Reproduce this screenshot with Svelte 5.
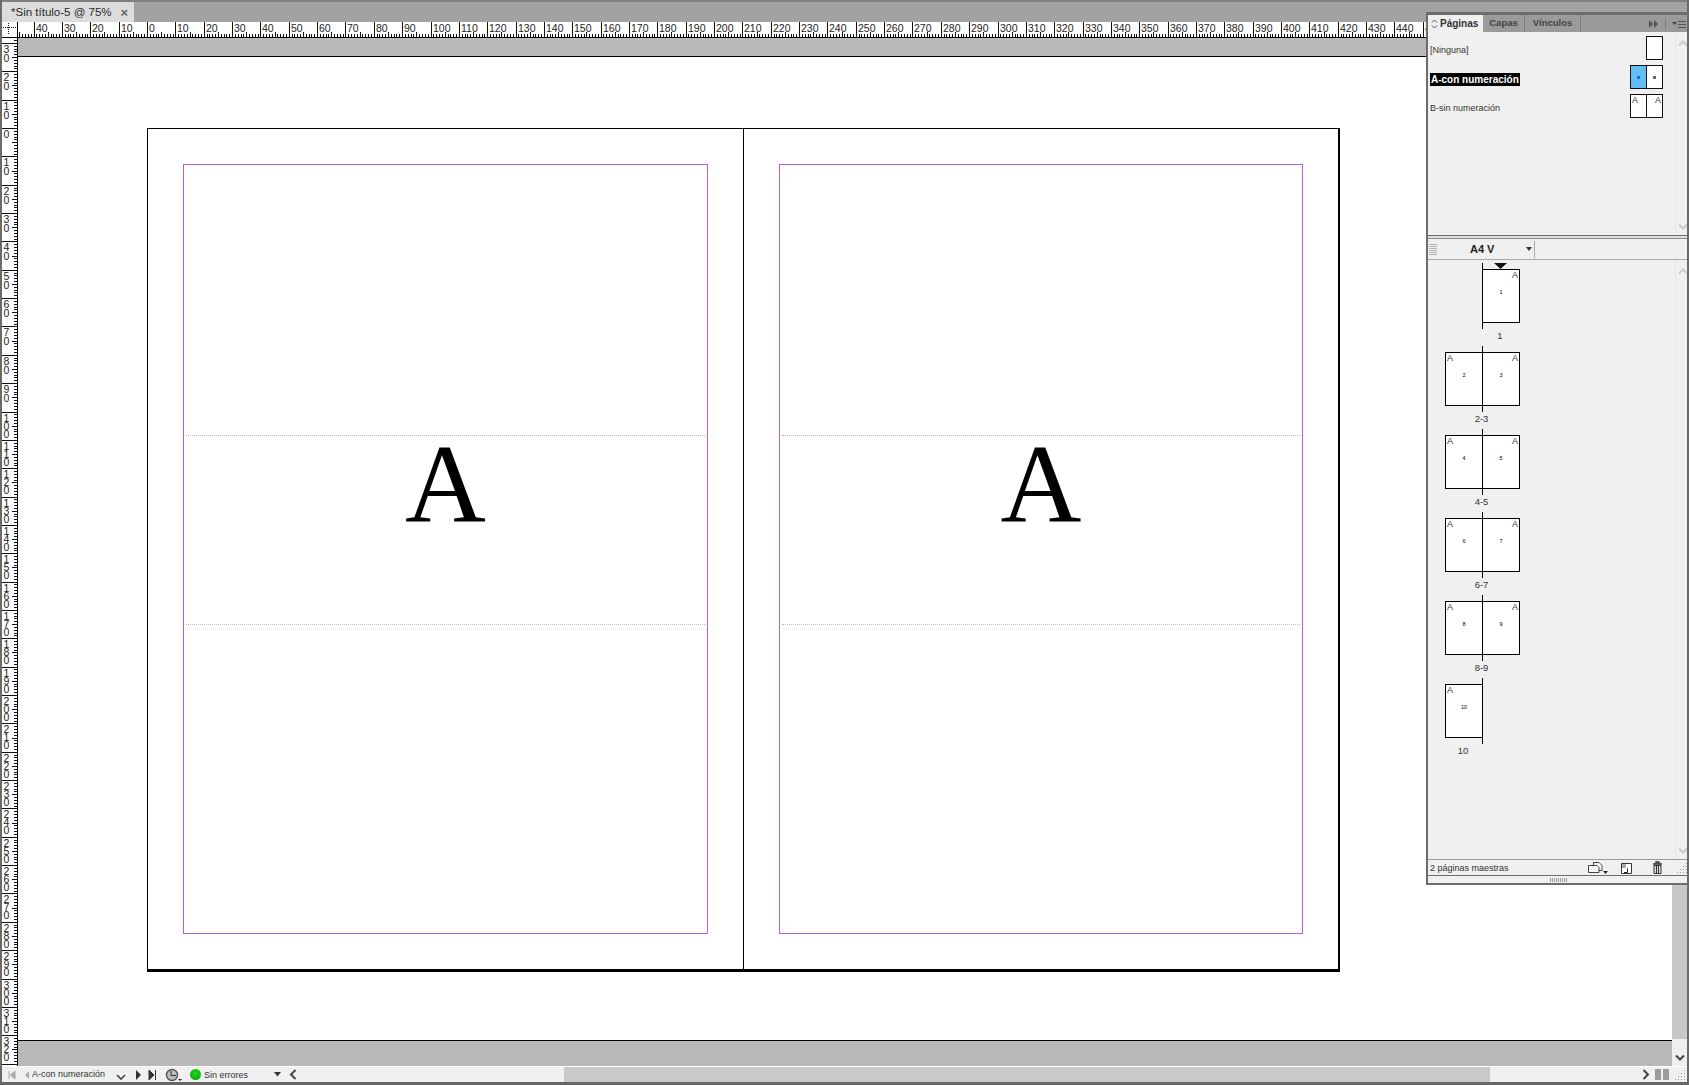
<script>
  const K = 2.835;
  const topTicks = [];
  for (let mm = -46; mm <= 460; mm++) topTicks.push({ mm, x: Math.round(129 + mm * K) + 0.5 });
  const leftTicks = [];
  for (let mm = -31; mm <= 333; mm++) leftTicks.push({ mm, y: Math.round(90 + mm * K) + 0.5 });
  const digits = (mm) => String(Math.abs(mm)).split('');

  const spreads = [
    { label: '1', pages: [{ n: '1', a: 'r' }], cls: 'only-right' },
    { label: '2-3', pages: [{ n: '2', a: 'l' }, { n: '3', a: 'r' }], cls: '' },
    { label: '4-5', pages: [{ n: '4', a: 'l' }, { n: '5', a: 'r' }], cls: '' },
    { label: '6-7', pages: [{ n: '6', a: 'l' }, { n: '7', a: 'r' }], cls: '' },
    { label: '8-9', pages: [{ n: '8', a: 'l' }, { n: '9', a: 'r' }], cls: '' },
    { label: '10', pages: [{ n: '10', a: 'l' }], cls: 'only-left' }
  ];
</script>

<div class="app">
  <div class="tabbar">
    <div class="doc-tab"><span>*Sin título-5 @ 75%</span><span class="close">×</span></div>
  </div>

  <div class="ruler-row">
    <div class="corner">
      <svg width="15" height="15" viewBox="0 0 15 15">
        <path d="M1 5.5H15M6.5 1V12" stroke="#111" stroke-width="1" stroke-dasharray="1 1" fill="none" />
      </svg>
    </div>
    <svg class="ruler-top" width="1671" height="16">
      {#each topTicks as t}
        <line x1={t.x} x2={t.x} y1={t.mm % 10 === 0 ? 0 : t.mm % 5 === 0 ? 10 : 12} y2="15" stroke="#111" />
        {#if t.mm % 10 === 0}
          <text x={t.x + 1.5} y="9.5">{Math.abs(t.mm)}</text>
        {/if}
      {/each}
      <line x1="0" x2="1671" y1="15.5" y2="15.5" stroke="#000" />
    </svg>
  </div>

  <div class="body-row">
    <svg class="ruler-left" width="16" height="1029">
      {#each leftTicks as t}
        <line x1={t.mm % 10 === 0 ? 0 : t.mm % 5 === 0 ? 10 : 12} x2="15" y1={t.y} y2={t.y} stroke="#111" />
        {#if t.mm % 10 === 0}
          {#each digits(t.mm) as d, i}
            <text x="4.5" y={t.y + 9 + i * (Math.abs(t.mm) >= 100 ? 8 : 9)} text-anchor="middle">{d}</text>
          {/each}
        {/if}
      {/each}
      <line x1="15.5" x2="15.5" y1="0" y2="1029" stroke="#000" />
    </svg>

    <div class="workspace">
      <div class="band band-top"></div>
      <div class="canvas">
        <div class="spread">
          {#each [0, 1] as p}
            <div class="page" class:right={p === 1}>
              <div class="margins">
                <div class="zone-a"></div>
                <div class="zone-b"><span class="big-a">A</span></div>
              </div>
            </div>
          {/each}
        </div>
      </div>
      <div class="band band-bottom"></div>
    </div>

    <div class="vscroll">
      <div class="vthumb"></div>
      <div class="vend">
        <svg width="10" height="8" viewBox="0 0 10 8"><path d="M1 1.5 5 5.5 9 1.5" stroke="#444" stroke-width="2" fill="none" /></svg>
      </div>
    </div>
  </div>

  <div class="status">
    <div class="nav">
      <svg width="10" height="10" viewBox="0 0 10 10"><path d="M2 1V9M8 1 3.5 5 8 9Z" stroke="#aaa" fill="#aaa" /></svg>
      <svg class="navb" width="8" height="10" viewBox="0 0 8 10"><path d="M6 1 2 5 6 9Z" fill="#aaa" /></svg>
    </div>
    <div class="page-field">
      <span>A-con numeración</span>
      <svg width="10" height="8" viewBox="0 0 10 8"><path d="M1 2 5 6 9 2" stroke="#444" stroke-width="1.6" fill="none" /></svg>
    </div>
    <div class="nav2">
      <svg width="8" height="10" viewBox="0 0 8 10"><path d="M1 0 6 5 1 10Z" fill="#333" /></svg>
      <svg width="10" height="10" viewBox="0 0 10 10"><path d="M1 0 6 5 1 10ZM7.5 0V10" fill="#333" stroke="#333" stroke-width="1" /></svg>
    </div>
    <div class="preflight">
      <svg width="18" height="14" viewBox="0 0 18 14"><circle cx="7" cy="7" r="5.5" fill="#bdbdbd" stroke="#555" stroke-width="1.4" /><path d="M6 3V7.5H11" stroke="#333" fill="none" /><path d="M13 11H17L15 13Z" fill="#222" /></svg>
    </div>
    <div class="errors">
      <span class="dot"></span><span>Sin errores</span>
      <svg class="errarrow" width="7" height="5" viewBox="0 0 7 5"><path d="M0 0H7L3.5 4.5Z" fill="#333" /></svg>
    </div>
    <div class="hscroll">
      <svg class="hleft" width="8" height="11" viewBox="0 0 8 11"><path d="M6.5 1 2 5.5 6.5 10" stroke="#444" stroke-width="2" fill="none" /></svg>
      <div class="hthumb"></div>
      <svg class="hright" width="8" height="11" viewBox="0 0 8 11"><path d="M1.5 1 6 5.5 1.5 10" stroke="#444" stroke-width="2" fill="none" /></svg>
      <div class="blocks"><i></i><i></i></div>
      <svg class="grip" width="12" height="12" viewBox="0 0 12 12"><path d="M10 1.5h1M7 4.5h1M10 4.5h1M4 7.5h1M7 7.5h1M10 7.5h1M1 10.5h1M4 10.5h1M7 10.5h1M10 10.5h1" stroke="#999" fill="none" /></svg>
    </div>
  </div>

  <aside class="panel">
    <div class="p-tabs">
      <div class="p-tab active">
        <svg width="7" height="10" viewBox="0 0 7 10"><path d="M1 3.5 3.5 1 6 3.5M1 6.5 3.5 9 6 6.5" stroke="#555" fill="none" /></svg>
        <span>Páginas</span>
      </div>
      <div class="p-tab capas">Capas</div>
      <div class="p-tab vinculos">Vínculos</div>
      <div class="p-tools">
        <svg width="10" height="8" viewBox="0 0 10 8"><path d="M0 0 4 4 0 8ZM5 0 9 4 5 8Z" fill="#555" /></svg>
        <i></i>
        <svg width="14" height="8" viewBox="0 0 14 8"><path d="M0 2H5L2.5 5Z" fill="#444" /><path d="M6 1.5H14M6 4.5H14M6 7.5H14" stroke="#555" /></svg>
      </div>
    </div>

    <div class="masters">
      <div class="master-list">
        <div class="m-row">
          <span class="m-name">[Ninguna]</span>
          <div class="m-thumb"><div class="m-page"></div></div>
        </div>
        <div class="m-row">
          <span class="m-name sel">A-con numeración</span>
          <div class="m-thumb">
            <div class="m-page blue"><b></b></div>
            <div class="m-page"><b></b></div>
          </div>
        </div>
        <div class="m-row">
          <span class="m-name">B-sin numeración</span>
          <div class="m-thumb">
            <div class="m-page"><em class="l">A</em></div>
            <div class="m-page"><em class="r">A</em></div>
          </div>
        </div>
      </div>
      <div class="strack">
        <svg width="10" height="7" viewBox="0 0 10 7"><path d="M1 5.5 5 1.5 9 5.5" stroke="#ccc" stroke-width="2" fill="none" /></svg>
        <svg width="10" height="7" viewBox="0 0 10 7"><path d="M1 1.5 5 5.5 9 1.5" stroke="#ccc" stroke-width="2" fill="none" /></svg>
      </div>
    </div>

    <div class="p-divider"></div>

    <div class="p-toolbar">
      <svg class="tgrip" width="8" height="11" viewBox="0 0 8 11"><path d="M0 .5H8M0 2.5H8M0 4.5H8M0 6.5H8M0 8.5H8M0 10.5H8" stroke="#b5b5b5" /></svg>
      <strong>A4 V</strong>
      <svg class="tarrow" width="6" height="4" viewBox="0 0 6 4"><path d="M0 0H6L3 4Z" fill="#333" /></svg>
      <i></i>
    </div>

    <div class="pages">
      <div class="page-list">
        <svg class="current" width="13" height="6" viewBox="0 0 13 6"><path d="M0 0H13L6.5 6Z" fill="#111" /></svg>
        {#each spreads as s}
          <div class="s-row">
            <div class="sp {s.cls}">
              {#each s.pages as pg}
                <div class="tp">
                  <em class={pg.a}>A</em>
                  <small>{pg.n}</small>
                </div>
              {/each}
            </div>
            <div class="s-label {s.cls}">{s.label}</div>
          </div>
        {/each}
      </div>
      <div class="strack">
        <svg width="10" height="7" viewBox="0 0 10 7"><path d="M1 5.5 5 1.5 9 5.5" stroke="#ccc" stroke-width="2" fill="none" /></svg>
        <svg width="10" height="7" viewBox="0 0 10 7"><path d="M1 1.5 5 5.5 9 1.5" stroke="#ccc" stroke-width="2" fill="none" /></svg>
      </div>
    </div>

    <div class="p-footer">
      <span class="f-text">2 páginas maestras</span>
      <div class="f-icons">
        <svg width="20" height="13" viewBox="0 0 20 13"><path d="M.5 4.5H9L11 6.5V11.5H.5ZM5.5 4V1.5H11L14 4.5V9.5H11" stroke="#444" fill="#f8f8f8" /><path d="M15 10H20L17.5 13Z" fill="#222" /></svg>
        <svg width="11" height="12" viewBox="0 0 11 12"><path d="M.5 1.5H10.5V11.5H.5Z" stroke="#333" fill="#fff" /><path d="M1 2H5V6H1Z" fill="#aaa" /><path d="M6.5 6.5V10.5H3" stroke="#222" fill="none" /></svg>
        <svg class="trash" width="11" height="13" viewBox="0 0 11 13"><path d="M1 3H10M4 3V1H7V3" stroke="#333" fill="none" stroke-width="1.4" /><path d="M2 4.5H9V12.5H2Z" stroke="#333" fill="#ddd" /><path d="M4.5 5V12M6.5 5V12" stroke="#333" /></svg>
      </div>
      <svg class="grip" width="12" height="12" viewBox="0 0 12 12"><path d="M10 1.5h1M7 4.5h1M10 4.5h1M4 7.5h1M7 7.5h1M10 7.5h1M1 10.5h1M4 10.5h1M7 10.5h1M10 10.5h1" stroke="#999" fill="none" /></svg>
    </div>
    <div class="p-grip"><svg width="20" height="4" viewBox="0 0 20 4"><path d="M1.5 0V4M3.5 0V4M5.5 0V4M7.5 0V4M9.5 0V4M11.5 0V4M13.5 0V4M15.5 0V4M17.5 0V4" stroke="#999" /></svg></div>
  </aside>
</div>

<style>
  :global(body) { margin: 0; background: #fff; }
  .app {
    position: relative;
    width: 1689px;
    height: 1085px;
    overflow: hidden;
    display: flex;
    flex-direction: column;
    box-sizing: border-box;
    border-left: 2px solid #6a6a6a;
    border-right: 2px solid #6a6a6a;
    border-bottom: 3px solid #666;
    background: #f0f0f0;
    font-family: "Liberation Sans", Arial, sans-serif;
    color: #222;
  }
  .tabbar {
    height: 22px;
    flex: none;
    box-sizing: border-box;
    background: #a2a2a2;
    border-top: 2px solid #7f7f7f;
  }
  .doc-tab {
    width: 132px;
    height: 20px;
    box-sizing: border-box;
    padding-left: 9px;
    background: #dcdcdc;
    display: flex;
    align-items: center;
    font-size: 11.5px;
    white-space: nowrap;
    color: #2a2a2a;
  }
  .close { margin-left: 9px; font-size: 13px; color: #666; font-weight: 700; }

  .ruler-row { display: flex; height: 16px; flex: none; background: #fff; }
  .corner { width: 16px; height: 16px; border-bottom: 1px solid #000; border-right: 1px solid #000; box-sizing: border-box; flex: none; }
  .ruler-top { display: block; flex: none; }
  text { font-family: "Liberation Sans", Arial, sans-serif; font-size: 10.5px; fill: #222; }

  .body-row { display: flex; flex: 1; min-height: 0; }
  .ruler-left { display: block; flex: none; background: #fff; }
  .workspace { flex: 1; min-width: 0; display: flex; flex-direction: column; }
  .band { background: #b9b9b9; flex: none; }
  .band-top { height: 18px; border-bottom: 1px solid #000; }
  .band-bottom { height: 25px; border-top: 1px solid #000; }
  .canvas {
    flex: 1;
    min-height: 0;
    background: #fff;
    box-sizing: border-box;
    padding: 71px 0 0 129px;
  }
  .spread {
    width: 1193px;
    height: 844px;
    box-sizing: border-box;
    display: flex;
    border-style: solid;
    border-color: #000;
    border-width: 1px 2px 3px 1px;
  }
  .page {
    width: 595px;
    flex: none;
    box-sizing: border-box;
    padding: 35px;
  }
  .page.right { border-left: 1px solid #000; }
  .margins {
    height: 100%;
    box-sizing: border-box;
    border: 1px solid #b962ce;
    display: flex;
    flex-direction: column;
  }
  .zone-a { height: 270px; flex: none; }
  .zone-b {
    height: 188px;
    flex: none;
    margin: 0 2px;
    border-top: 1px dotted #bbb;
    border-bottom: 1px dotted #bbb;
    display: flex;
    justify-content: center;
  }
  .big-a {
    font-family: "Liberation Serif", serif;
    font-size: 112px;
    line-height: 96px;
    color: #000;
  }

  .vscroll { width: 15px; flex: none; display: flex; flex-direction: column; background: #efefef; }
  .vthumb { flex: 1; background: #c8c8c8; }
  .vend { height: 27px; flex: none; display: flex; align-items: flex-end; justify-content: center; padding-bottom: 4px; box-sizing: border-box; }

  .status {
    height: 15px;
    flex: none;
    display: flex;
    align-items: center;
    font-size: 9px;
    white-space: nowrap;
    background: #f0f0f0;
    border-top: 1px solid #fff;
    color: #333;
  }
  .nav { width: 30px; flex: none; display: flex; align-items: center; padding-left: 5px; box-sizing: border-box; }
  .navb { margin-left: 6px; }
  .page-field { width: 94px; flex: none; display: flex; justify-content: space-between; align-items: center; box-sizing: border-box; }
  .page-field span { position: relative; top: -1px; }
  .page-field svg { margin-top: 5px; }
  .nav2 { width: 36px; flex: none; display: flex; gap: 5px; align-items: center; padding-left: 9px; box-sizing: border-box; }
  .preflight { width: 24px; flex: none; display: flex; padding-left: 3px; box-sizing: border-box; }
  .errors { width: 99px; flex: none; display: flex; align-items: center; box-sizing: border-box; padding-left: 4px; }
  .dot {
    width: 11px; height: 11px; border-radius: 50%; flex: none; margin-right: 3px;
    background: radial-gradient(circle at 50% 40%, #22d822, #079a07);
  }
  .errarrow { margin-left: 26px; }
  .hscroll { flex: 1; min-width: 0; display: flex; align-items: center; height: 100%; }
  .hleft { margin-left: 4px; flex: none; }
  .hthumb { width: 926px; height: 100%; margin-left: 267px; background: #c9c9c9; flex: none; }
  .hright { margin-left: 152px; flex: none; }
  .blocks { display: flex; gap: 2px; margin-left: 5px; }
  .blocks i { width: 6px; height: 11px; background: #9c9c9c; display: block; }
  .status .grip { margin-left: 5px; flex: none; }

  .panel {
    position: absolute;
    left: 1424px;
    top: 12px;
    width: 263px;
    height: 873px;
    box-sizing: border-box;
    border: 2px solid #6c6c6c;
    border-right: 0;
    border-top-width: 3px;
    background: #f0f0f0;
    display: flex;
    flex-direction: column;
    font-size: 9px;
    white-space: nowrap;
  }
  .p-tabs { height: 17px; flex: none; display: flex; background: #9a9a9a; }
  .p-tab {
    font-weight: 700;
    font-size: 9.5px;
    line-height: 16px;
    color: #444;
    box-sizing: border-box;
    border-right: 1px solid #7d7d7d;
    text-align: center;
  }
  .p-tab.active {
    width: 55px;
    background: #f0f0f0;
    color: #333;
    border-right: 0;
    display: flex;
    align-items: center;
    gap: 2px;
    padding-left: 3px;
    font-size: 10px;
  }
  .capas { width: 42px; }
  .vinculos { width: 56px; }
  .p-tools { margin-left: auto; display: flex; align-items: center; gap: 6px; padding-right: 3px; }
  .p-tools i { width: 1px; height: 10px; background: #777; display: block; }

  .masters { height: 203px; flex: none; display: flex; }
  .master-list { flex: 1; padding: 4px 12px 0 2px; display: flex; flex-direction: column; gap: 5px; }
  .m-row { display: flex; justify-content: space-between; align-items: center; height: 24px; color: #333; }
  .m-name { margin-top: 4px; }
  .sel { background: #000; color: #fff; font-weight: 700; font-size: 10px; padding: 0 1px; line-height: 13px; }
  .m-thumb { display: flex; }
  .m-page {
    width: 17px;
    height: 24px;
    box-sizing: border-box;
    border: 1px solid #111;
    background: #fff;
    position: relative;
    display: flex;
    align-items: center;
    justify-content: center;
  }
  .m-page + .m-page { margin-left: -1px; }
  .m-page.blue { background: #62bdf5; }
  .m-page b { width: 3px; height: 3px; background: #666; display: block; }
  .m-page.blue b { background: #1673b8; }
  .m-page em, .tp em {
    position: absolute;
    top: 0;
    font-style: normal;
    font-size: 9px;
    line-height: 11px;
    color: #333;
  }
  em.l { left: 1px; }
  em.r { right: 1px; }

  .strack {
    width: 14px;
    flex: none;
    box-sizing: border-box;
    border-left: 1px solid #e4e4e4;
    display: flex;
    flex-direction: column;
    justify-content: space-between;
    align-items: center;
    padding: 8px 0 5px;
  }

  .p-divider { height: 4px; flex: none; box-sizing: border-box; border-top: 1px solid #6c6c6c; border-bottom: 1px solid #8a8a8a; background: #dedede; }
  .p-toolbar {
    height: 21px;
    flex: none;
    box-sizing: border-box;
    border-bottom: 1px solid #a8a8a8;
    display: flex;
    align-items: center;
    font-size: 11px;
  }
  .tgrip { margin-left: 1px; }
  .p-toolbar strong { margin-left: 33px; color: #222; }
  .tarrow { margin-left: 32px; }
  .p-toolbar i { display: block; width: 1px; height: 17px; background: #aaa; margin-left: 2px; }

  .pages { flex: 1; min-height: 0; display: flex; }
  .page-list { flex: 1; position: relative; padding: 9px 0 0 17px; }
  .current { position: absolute; left: 66px; top: 3px; }
  .s-row { height: 83px; width: 75px; }
  .sp { display: flex; width: 75px; height: 54px; position: relative; }
  .sp::after {
    content: "";
    position: absolute;
    left: 37px;
    top: -6px;
    bottom: -6px;
    width: 1px;
    background: #000;
  }
  .sp.only-right { padding-left: 37px; box-sizing: border-box; }
  .tp {
    width: 38px;
    height: 54px;
    box-sizing: border-box;
    border: 1px solid #000;
    background: #fff;
    position: relative;
    display: flex;
    align-items: center;
    justify-content: center;
  }
  .tp + .tp { margin-left: -1px; }
  .tp small { font-size: 5.5px; line-height: 6px; margin-top: -8px; color: #000; }
  .s-label { text-align: center; font-size: 9.5px; line-height: 14px; margin-top: 6px; padding-right: 2px; color: #333; }
  .s-label.only-right { padding: 0 0 0 35px; box-sizing: border-box; }
  .s-label.only-left { padding-right: 39px; box-sizing: border-box; }

  .p-footer {
    height: 16px;
    flex: none;
    box-sizing: border-box;
    border-top: 1px solid #9a9a9a;
    display: flex;
    align-items: center;
    padding-left: 2px;
    color: #333;
  }
  .f-text { margin-top: 1px; }
  .f-icons { margin-left: auto; display: flex; align-items: center; gap: 13px; margin-right: 13px; }
  .f-icons .trash { margin-left: 7px; }
  .p-footer .grip { margin-right: 1px; }
  .p-grip {
    height: 8px;
    flex: none;
    box-sizing: border-box;
    border-top: 1px solid #6c6c6c;
    display: flex;
    align-items: center;
    justify-content: center;
  }
  svg { display: block; }
</style>
